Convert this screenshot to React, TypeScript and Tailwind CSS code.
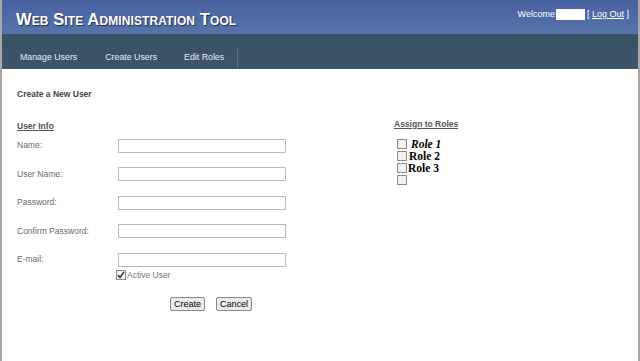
import React from "react";

const Check = ({ checked = false }: { checked?: boolean }) => (
  <span className="inline-flex items-center justify-center w-[10px] h-[10px] border border-[#8a8a8a] bg-[#f2f2f2] shrink-0">
    {checked && (
      <svg width="8" height="8" viewBox="0 0 8 8">
        <path d="M1 4 L3 6.5 L7 1" stroke="#333" strokeWidth="1.4" fill="none" />
      </svg>
    )}
  </span>
);

const Field = ({ label }: { label: string }) => (
  <div className="flex items-center h-[14px]">
    <span className="w-[101px] text-[8.5px] text-[#6a6a6a]">{label}</span>
    <div className="w-[168px] h-[14px] border border-[#b8b8b8] bg-white" />
  </div>
);

export default function App() {
  return (
    <div
      className="w-[640px] h-[361px] bg-white relative overflow-hidden border-l-2 border-r-2 border-[#a8a8a8]"
      style={{ fontFamily: "'Liberation Sans', Arial, sans-serif" }}
    >
      <div className="h-[34px] bg-gradient-to-b from-[#4862a0] to-[#5673aa] flex items-start justify-between pl-[14px] pr-[9px]">
        <div
          className="text-white font-bold text-[16.5px] mt-[7px] tracking-[0.1px] [font-variant:small-caps]"
          style={{ textShadow: "1px 1px 1px #1e2f55" }}
        >
          Web Site Administration Tool
        </div>
        <div className="flex items-center mt-[8px] text-[9px] text-white">
          <span>Welcome</span>
          <span className="w-[29px] h-[11px] bg-white ml-[1px]" />
          <span className="ml-[2px]">[ <span className="underline">Log Out</span> ]</span>
        </div>
      </div>
      <div className="h-[35px] bg-gradient-to-b from-[#3a5266] to-[#3e5569] flex items-end">
        <div className="flex items-center h-[22px] text-[8.8px] text-[#e6ecf2]">
          <span className="ml-[18px]">Manage Users</span>
          <span className="ml-[28px]">Create Users</span>
          <span className="ml-[27px]">Edit Roles</span>
          <span className="ml-[13px] w-px h-[21px] bg-[#5a7084]" />
        </div>
      </div>
      <div className="pl-[15px] pt-[19px] flex">
        <div className="w-[377px]">
          <div className="text-[8.5px] font-bold text-[#444]">Create a New User</div>
          <div className="text-[8.5px] font-bold text-[#555] underline mt-[19px]">User Info</div>
          <div className="flex flex-col gap-[14.5px] mt-[6px]">
            <Field label="Name:" />
            <Field label="User Name:" />
            <Field label="Password:" />
            <Field label="Confirm Password:" />
            <Field label="E-mail:" />
          </div>
          <div className="flex items-center gap-[1px] ml-[99px] mt-[2px] text-[8.5px] text-[#777]">
            <Check checked />
            <span>Active User</span>
          </div>
          <div className="flex gap-[11px] ml-[153px] mt-[16px]">
            <button className="h-[14px] px-[3px] text-[9px] leading-none text-black bg-[#ececec] border border-[#888] rounded-[2px]">Create</button>
            <button className="h-[14px] px-[3px] text-[9px] leading-none text-black bg-[#ececec] border border-[#888] rounded-[2px]">Cancel</button>
          </div>
        </div>
        <div className="pt-[30px]">
          <div className="text-[8.5px] font-bold text-[#555] underline">Assign to Roles</div>
          <div
            className="flex flex-col mt-[7px] ml-[3px] text-[11.5px] font-bold text-black leading-[12px]"
            style={{ fontFamily: "'Liberation Serif', 'Times New Roman', serif" }}
          >
            <div className="flex items-center h-[12px] gap-[4px]"><Check /><span className="italic">Role 1</span></div>
            <div className="flex items-center h-[12px] gap-[2px]"><Check /><span>Role 2</span></div>
            <div className="flex items-center h-[12px] gap-[1px]"><Check /><span>Role 3</span></div>
            <div className="flex items-center h-[12px]"><Check /></div>
          </div>
        </div>
      </div>
    </div>
  );
}
